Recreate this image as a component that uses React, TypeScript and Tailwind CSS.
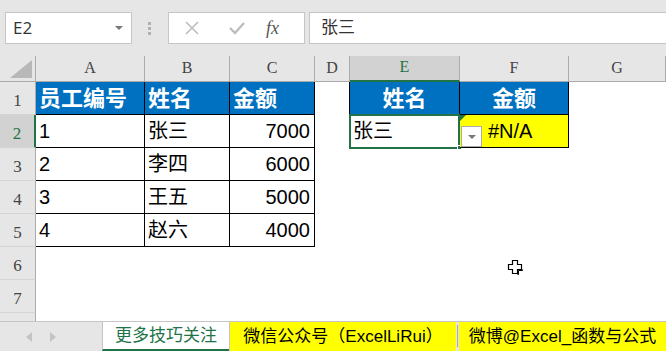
import React from "react";

const cols = [
  { k: "A", w: "w-[109px]" },
  { k: "B", w: "w-[85px]" },
  { k: "C", w: "w-[85px]" },
  { k: "D", w: "w-[35px]" },
  { k: "E", w: "w-[110px]" },
  { k: "F", w: "w-[109px]" },
  { k: "G", w: "w-[97px]" },
];

const rows: string[][] = [
  ["员工编号", "姓名", "金额", "", "姓名", "金额", ""],
  ["1", "张三", "7000", "", "张三", "#N/A", ""],
  ["2", "李四", "6000", "", "", "", ""],
  ["3", "王五", "5000", "", "", "", ""],
  ["4", "赵六", "4000", "", "", "", ""],
  ["", "", "", "", "", "", ""],
  ["", "", "", "", "", "", ""],
  ["", "", "", "", "", "", ""],
];

const cjk = "font-['Liberation_Sans','Noto_Sans_CJK_SC',sans-serif]";
const serif = "font-['Liberation_Serif','Noto_Serif_CJK_SC',serif]";

function cellClass(r: number, c: number) {
  const inMain = r <= 4 && c <= 2;
  const inLookup = r <= 1 && (c === 4 || c === 5);
  let cls = "h-full shrink-0 flex items-center text-[20px] text-black ";
  if (inMain || inLookup) cls += "border-r border-b border-black ";
  if (r === 0 && (inMain || inLookup)) cls += "bg-[#0070c0] text-white font-bold text-[22px] ";
  if (c === 3 && r <= 1) cls += "border-r border-black ";
  if (r === 1 && c === 5) cls += "bg-[#ffff00] ";
  if (c === 2 && r > 0) cls += "justify-end pr-[4px] ";
  else if (r === 0 && c >= 4) cls += "justify-center ";
  else cls += "pl-[3px] ";
  return cls;
}

function Cursor() {
  return (
    <svg className="absolute left-[507px] top-[259px]" width="16" height="16" viewBox="0 0 16 16">
      <path d="M5.5 1.5h5v4h4v5h-4v4h-5v-4h-4v-5h4z" fill="#fff" stroke="#000" strokeWidth="1.2" />
      <path d="M10.5 15.5h1v-4h4v-1" fill="none" stroke="#000" strokeWidth="1" />
    </svg>
  );
}

export default function App() {
  return (
    <div className="relative flex h-[351px] w-[666px] flex-col overflow-hidden bg-white">
      {/* formula bar */}
      <div className="flex h-[56px] shrink-0 items-start bg-[#e6e6e6] pt-[12px]">
        <div className="ml-[5px] flex h-[32px] w-[127px] items-center justify-between border border-[#c6c6c6] bg-white pl-[7px] pr-[8px]">
          <span className="font-['Open_Sans',sans-serif] text-[17px] text-[#333]">E2</span>
          <span className="h-0 w-0 border-x-[4px] border-t-[4px] border-x-transparent border-t-[#777]" />
        </div>
        <div className="ml-[16px] mr-[17px] flex h-[32px] flex-col items-center justify-center gap-[2px]">
          <span className="h-[3px] w-[3px] bg-[#b0b0b0]" />
          <span className="h-[3px] w-[3px] bg-[#b0b0b0]" />
          <span className="h-[3px] w-[3px] bg-[#b0b0b0]" />
        </div>
        <div className="flex h-[32px] w-[137px] items-center border border-[#c6c6c6] bg-white">
          <svg className="ml-[15px]" width="16" height="16" viewBox="0 0 16 16">
            <path d="M2 2l12 12M14 2L2 14" stroke="#bdbdbd" strokeWidth="1.6" />
          </svg>
          <svg className="ml-[28px]" width="18" height="16" viewBox="0 0 18 16">
            <path d="M2 8l5 5L16 3" fill="none" stroke="#bdbdbd" strokeWidth="2.4" />
          </svg>
          <span className="ml-[20px] font-['Liberation_Serif',serif] text-[18px] italic text-[#555]">fx</span>
        </div>
        <div className="ml-[4px] flex h-[32px] flex-1 items-center border-y border-l border-[#c6c6c6] bg-white pl-[11px]">
          <span className={`${cjk} text-[17px] text-[#333]`}>张三</span>
        </div>
      </div>

      {/* column headers */}
      <div className={`flex h-[26px] shrink-0 bg-[#e6e6e6] ${serif} text-[16px] text-[#444]`}>
        <div className="relative w-[36px] shrink-0 border-r border-b border-[#ababab]">
          <svg className="absolute bottom-[3px] right-[3px]" width="22" height="18" viewBox="0 0 22 18">
            <path d="M22 0V18H0z" fill="#b8b8b8" />
          </svg>
        </div>
        {cols.map((c) => (
          <div
            key={c.k}
            className={`${c.w} flex shrink-0 items-end justify-center pb-[1px] ${
              c.k === "E"
                ? "border-b-2 border-r border-b-[#217346] border-r-[#ababab] bg-[#d2d2d2] text-[#217346]"
                : "border-b border-r border-[#ababab]"
            }`}
          >
            {c.k}
          </div>
        ))}
      </div>

      {/* grid rows */}
      <div className="flex-1 overflow-hidden">
        {rows.map((row, r) => (
          <div key={r} className="flex h-[33px]">
            <div
              className={`flex w-[36px] shrink-0 items-end justify-center pb-[1px] ${serif} text-[17px] ${
                r === 1
                  ? "border-r-2 border-b border-r-[#217346] border-b-[#d4d4d4] bg-[#d2d2d2] text-[#217346]"
                  : "border-r border-b border-r-[#ababab] border-b-[#d4d4d4] bg-[#e6e6e6] text-[#444]"
              }`}
            >
              {r < 7 ? r + 1 : ""}
            </div>
            {cols.map((c, ci) => (
              <div key={c.k} className={`${c.w} ${cellClass(r, ci)} ${cjk} relative`}>
                {r === 1 && ci === 5 ? (
                  <>
                    <span className="absolute left-0 top-0 h-0 w-0 border-r-[6px] border-t-[6px] border-r-transparent border-t-[#217346]" />
                    <span className="absolute left-[1px] top-[11px] flex h-[21px] w-[21px] items-center justify-center border border-[#ababab] bg-white">
                      <span className="h-0 w-0 border-x-[4px] border-t-[4px] border-x-transparent border-t-[#777]" />
                    </span>
                    <span className="ml-[25px]">{row[ci]}</span>
                  </>
                ) : (
                  row[ci]
                )}
                {r === 1 && ci === 4 && (
                  <>
                    <span className="absolute -left-[1px] -top-[1px] h-[35px] w-[111px] border-2 border-[#217346]" />
                    <span className="absolute -bottom-[3px] -right-[3px] h-[5px] w-[5px] border border-white bg-[#217346]" />
                  </>
                )}
              </div>
            ))}
          </div>
        ))}
      </div>

      {/* sheet tabs */}
      <div className={`flex h-[30px] shrink-0 border-t border-[#c6c6c6] bg-[#e6e6e6] ${cjk}`}>
        <div className="flex w-[102px] shrink-0 items-center gap-[18px] pl-[26px]">
          <svg width="6" height="10" viewBox="0 0 6 10">
            <path d="M6 0V10L0 5z" fill="#c4c4c4" />
          </svg>
          <svg width="6" height="10" viewBox="0 0 6 10">
            <path d="M0 0V10L6 5z" fill="#c4c4c4" />
          </svg>
        </div>
        <div className="flex w-[127px] shrink-0 items-center justify-center border-b-2 border-l border-b-[#217346] border-l-[#c6c6c6] bg-white text-[17px] text-[#217346]">
          更多技巧关注
        </div>
        <div className="flex w-[227px] shrink-0 items-center justify-center border-l border-[#c6c6c6] bg-[#ffff00] text-[17px] text-black">
          微信公众号（ExcelLiRui）
        </div>
        <div className="w-[3px] shrink-0 bg-[#e6e6e6]">
          <div className="mx-auto mt-[3px] h-[22px] w-px bg-[#aaa]" />
        </div>
        <div className="flex flex-1 items-center justify-center bg-[#ffff00] text-[17px] text-black">
          微博@Excel_函数与公式
        </div>
      </div>

      <Cursor />
    </div>
  );
}
